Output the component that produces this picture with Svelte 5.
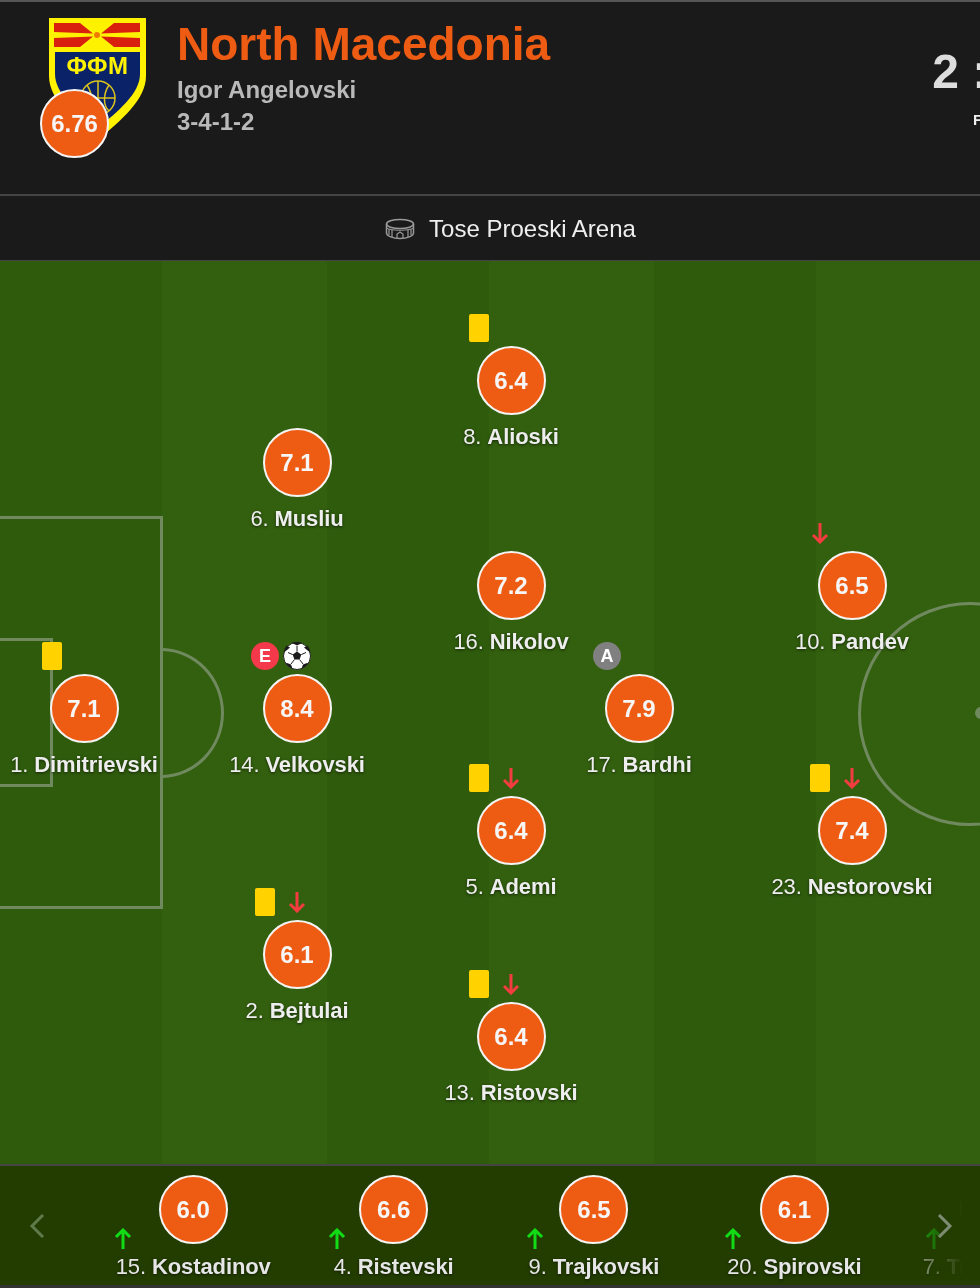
<script>
  const players = [
    { x: 84, y: 709, n: '1.', name: 'Dimitrievski', r: '7.1', left: 'card' },
    { x: 297, y: 463, n: '6.', name: 'Musliu', r: '7.1' },
    { x: 297, y: 709, n: '14.', name: 'Velkovski', r: '8.4', left: 'e', right: 'ball' },
    { x: 297, y: 955, n: '2.', name: 'Bejtulai', r: '6.1', left: 'card', right: 'down' },
    { x: 511, y: 381, n: '8.', name: 'Alioski', r: '6.4', left: 'card' },
    { x: 511, y: 586, n: '16.', name: 'Nikolov', r: '7.2' },
    { x: 511, y: 831, n: '5.', name: 'Ademi', r: '6.4', left: 'card', right: 'down' },
    { x: 511, y: 1037, n: '13.', name: 'Ristovski', r: '6.4', left: 'card', right: 'down' },
    { x: 639, y: 709, n: '17.', name: 'Bardhi', r: '7.9', left: 'a' },
    { x: 852, y: 586, n: '10.', name: 'Pandev', r: '6.5', left: 'down' },
    { x: 852, y: 831, n: '23.', name: 'Nestorovski', r: '7.4', left: 'card', right: 'down' }
  ];
  const subs = [
    { n: '15.', name: 'Kostadinov', r: '6.0', dx: -70 },
    { n: '4.', name: 'Ristevski', r: '6.6', dx: -57 },
    { n: '9.', name: 'Trajkovski', r: '6.5', dx: -59 },
    { n: '20.', name: 'Spirovski', r: '6.1', dx: -61 },
    { n: '7.', name: 'Trajanovski', r: '6.3', dx: -61 }
  ];
</script>

{#snippet mark(kind)}
  {#if kind === 'card'}
    <span class="card"></span>
  {:else if kind === 'down'}
    <svg class="arrow" viewBox="0 0 18 22" width="18" height="22"><path d="M9 1V20M2 13L9 20L16 13" fill="none" stroke="#f23c3f" stroke-width="3"/></svg>
  {:else if kind === 'e'}
    <span class="dot red">E</span>
  {:else if kind === 'a'}
    <span class="dot grey">A</span>
  {:else if kind === 'ball'}
    <svg viewBox="0 0 28 28" width="28" height="28">
      <circle cx="14" cy="14" r="13.500" fill="#fff" stroke="#222" stroke-width="1"/>
      <path d="M14 9.500L18.300 12.600L16.600 17.600H11.400L9.700 12.600Z" fill="#1c1c1c"/>
      <path d="M10 1.500L14 3.600L18 1.500L19 .9A14 14 0 0 0 9 .9Z M1.500 10L4 8L7 5.500L3.500 3.500A14 14 0 0 0 .5 12Z M26.500 10L24 8L21 5.500L24.500 3.500A14 14 0 0 1 27.500 12Z M4 21L8 22.500L9.500 26.500A14 14 0 0 1 2.600 21.500Z M24 21L20 22.500L18.500 26.500A14 14 0 0 0 25.400 21.500Z" fill="#1c1c1c"/>
      <path d="M14 9.500V4M18.300 12.600L23 10.500M16.600 17.600L20 22M11.400 17.600L8 22M9.700 12.600L5 10.500" stroke="#1c1c1c" stroke-width="1"/>
    </svg>
  {/if}
{/snippet}

<div class="page">
  <header class="top">
    <div class="crest">
      <svg viewBox="0 0 97 122" width="97" height="122">
        <path d="M0 0H97V58C97 82 72 102 49 122C25 102 0 82 0 58Z" fill="#fff200"/>
        <path d="M5 5H31L44 15.500L5 14Z M5 20L44 18.500L31 29H5Z M91 5H65L52 15.500L91 14Z M91 20L52 18.500L65 29H91Z" fill="#d9200f"/>
        <circle cx="48" cy="17" r="3" fill="#f07a00"/>
        <path d="M6 34H91V56C91 76 68 94 49 110C29 94 6 76 6 56Z" fill="#0a2268"/>
        <text x="48.500" y="56" class="ffm">ФФМ</text>
        <g fill="none" stroke="#d9c31c" stroke-width="1.500">
          <circle cx="49" cy="80" r="17"/>
          <path d="M32 80H66M49 63V97M38 67C44 76 44 88 38 93M60 67C54 76 54 88 60 93"/>
        </g>
      </svg>
      <span class="badge">6.76</span>
    </div>
    <div class="team">
      <h1>North Macedonia</h1>
      <p>Igor Angelovski</p>
      <p>3-4-1-2</p>
    </div>
    <div class="score">
      <strong>2 : 1</strong>
      <small>FT</small>
    </div>
  </header>

  <div class="venue">
    <svg viewBox="0 0 30 22" width="30" height="22" fill="none" stroke="#9a9a9a" stroke-width="1.500">
      <ellipse cx="15" cy="6" rx="13.500" ry="4.500"/>
      <path d="M1.500 6V15C1.500 18 8 20.500 15 20.500S28.500 18 28.500 15V6"/>
      <path d="M1.500 10C6 13 24 13 28.500 10" stroke-width="1"/>
      <path d="M7 12V19M23 12V19M12 20V16L15 14L18 16V20M4 11V17M26 11V17" stroke-width="1.200"/>
    </svg>
    <span>Tose Proeski Arena</span>
  </div>

  <section class="pitch">
    <div class="box"></div>
    <div class="goal"></div>
    <div class="arc"></div>
    <div class="centre"></div>
    <div class="spot"></div>

    {#each players as p}
      <div class="player" style="left:{p.x}px;top:{p.y - 67 - 261}px">
        <div class="marks">
          <span class="slot">{@render mark(p.left)}</span>
          <span class="slot">{@render mark(p.right)}</span>
          <span class="slot"></span>
        </div>
        <span class="badge">{p.r}</span>
        <div class="name"><span>{p.n}</span> <b>{p.name}</b></div>
      </div>
    {/each}
  </section>

  <section class="subs">
    {#each subs as s}
      <div class="sub">
        <span class="badge">{s.r}</span>
        <svg class="uparrow" style="margin-left:{s.dx}px" viewBox="0 0 18 22" width="18" height="22"><path d="M9 21V2M2 9L9 2L16 9" fill="none" stroke="#12dc16" stroke-width="3"/></svg>
        <div class="name"><span>{s.n}</span> <b>{s.name}</b></div>
      </div>
    {/each}
    <div class="fade"></div>
    <svg class="chev prev" viewBox="0 0 16 24" width="16" height="24"><path d="M14 1L3 12L14 23" fill="none" stroke="#5f7a4a" stroke-width="3"/></svg>
    <svg class="chev next" viewBox="0 0 16 24" width="16" height="24"><path d="M2 1L13 12L2 23" fill="none" stroke="#7d8c72" stroke-width="3"/></svg>
  </section>
</div>

<style>
  :global(body) {
    margin: 0;
    background: #1a1a1a;
  }
  .page {
    width: 980px;
    height: 1288px;
    overflow: hidden;
    background: #1a1a1a;
    font-family: "Liberation Sans", Arial, sans-serif;
    filter: blur(0.45px);
  }
  .top {
    box-sizing: border-box;
    height: 196px;
    border-top: 2px solid #555;
    border-bottom: 2px solid #444;
    display: flex;
    width: 1040px;
  }
  .crest {
    position: relative;
    width: 177px;
    flex: none;
    padding: 16px 0 0 49px;
    box-sizing: border-box;
  }
  .crest svg {
    display: block;
  }
  .ffm {
    font: 700 24px "Liberation Sans", sans-serif;
    letter-spacing: 0.5px;
    fill: #fff200;
    text-anchor: middle;
  }
  .crest .badge {
    position: absolute;
    left: 40px;
    top: 87px;
  }
  .team h1 {
    margin: 15px 0 3px;
    font-size: 46px;
    line-height: 54px;
    font-weight: 700;
    color: #ee5c13;
  }
  .team p {
    margin: 0;
    font-size: 24px;
    line-height: 32px;
    font-weight: 700;
    color: #b9b9b9;
  }
  .score {
    flex: none;
    width: 100px;
    margin-left: 380px;
    padding-top: 41px;
    text-align: center;
    color: #ddd;
    display: flex;
    flex-direction: column;
  }
  .score strong {
    font-size: 48px;
    line-height: 58px;
  }
  .score small {
    font-size: 15px;
    font-weight: 700;
    margin-top: 10px;
    padding-left: 4px;
    color: #eee;
  }
  .venue {
    box-sizing: border-box;
    height: 65px;
    width: 1021px;
    padding-top: 2px;
    border-bottom: 1px solid #444;
    display: flex;
    align-items: center;
    justify-content: center;
    gap: 14px;
    color: #eee;
    font-size: 24px;
  }
  .pitch {
    position: relative;
    height: 903px;
    overflow: hidden;
    background: repeating-linear-gradient(90deg, #2f5b0d 0 162.500px, #33600f 162.500px 327px);
  }
  .box, .goal, .arc, .centre {
    position: absolute;
    box-sizing: border-box;
    border: 3px solid #70895f;
  }
  .box {
    left: -10px;
    top: 255px;
    width: 173px;
    height: 393px;
  }
  .goal {
    left: -10px;
    top: 377px;
    width: 63px;
    height: 149px;
  }
  .arc {
    left: 98px;
    top: 387px;
    width: 126px;
    height: 130px;
    border-radius: 50%;
    clip-path: inset(0 0 0 65px);
  }
  .centre {
    left: 858px;
    top: 341px;
    width: 224px;
    height: 224px;
    border-radius: 50%;
  }
  .spot {
    position: absolute;
    left: 975px;
    top: 446px;
    width: 12px;
    height: 12px;
    border-radius: 50%;
    background: #70895f;
  }
  .player {
    position: absolute;
    transform: translateX(-50%);
    display: flex;
    flex-direction: column;
    align-items: center;
    width: 220px;
  }
  .marks {
    display: flex;
    justify-content: center;
    height: 28px;
    margin-bottom: 4px;
  }
  .slot {
    width: 32px;
    display: flex;
    justify-content: center;
    align-items: center;
  }
  .badge {
    box-sizing: border-box;
    width: 69px;
    height: 69px;
    border-radius: 50%;
    border: 2px solid #f4f4f4;
    background: #ee5c13;
    color: #f6f6f6;
    font-size: 24px;
    font-weight: 700;
    display: flex;
    align-items: center;
    justify-content: center;
    flex: none;
  }
  .name {
    margin-top: 8px;
    font-size: 22px;
    line-height: 28px;
    letter-spacing: -0.1px;
    color: #eee;
    white-space: nowrap;
    text-shadow: 0 1px 3px rgba(0, 0, 0, 0.6);
  }
  .card {
    width: 20px;
    height: 28px;
    border-radius: 2px;
    background: #ffd200;
  }
  .dot {
    width: 28px;
    height: 28px;
    border-radius: 50%;
    color: #fff;
    font-size: 18px;
    font-weight: 700;
    display: flex;
    align-items: center;
    justify-content: center;
  }
  .red {
    background: #f4394a;
  }
  .grey {
    background: #808080;
  }
  .subs {
    position: relative;
    box-sizing: border-box;
    height: 124px;
    border-top: 2px solid #444;
    border-bottom: 3px solid #333;
    padding: 9px 0 0 93px;
    display: flex;
    background: #233d00;
    overflow: hidden;
  }
  .sub {
    position: relative;
    flex: none;
    width: 200.400px;
    display: flex;
    flex-direction: column;
    align-items: center;
  }
  .uparrow {
    position: absolute;
    left: 50%;
    top: 53px;
    transform: translateX(-9px);
  }
  .sub .name {
    margin-top: 9px;
    color: #e6e6e6;
  }
  .fade {
    position: absolute;
    top: 0;
    bottom: 0;
    right: 0;
    width: 70px;
    background: linear-gradient(90deg, rgba(35, 61, 0, 0.35), #233d00 75%);
  }
  .chev {
    position: absolute;
    top: 48px;
  }
  .prev {
    left: 29px;
  }
  .next {
    left: 937px;
  }
</style>
